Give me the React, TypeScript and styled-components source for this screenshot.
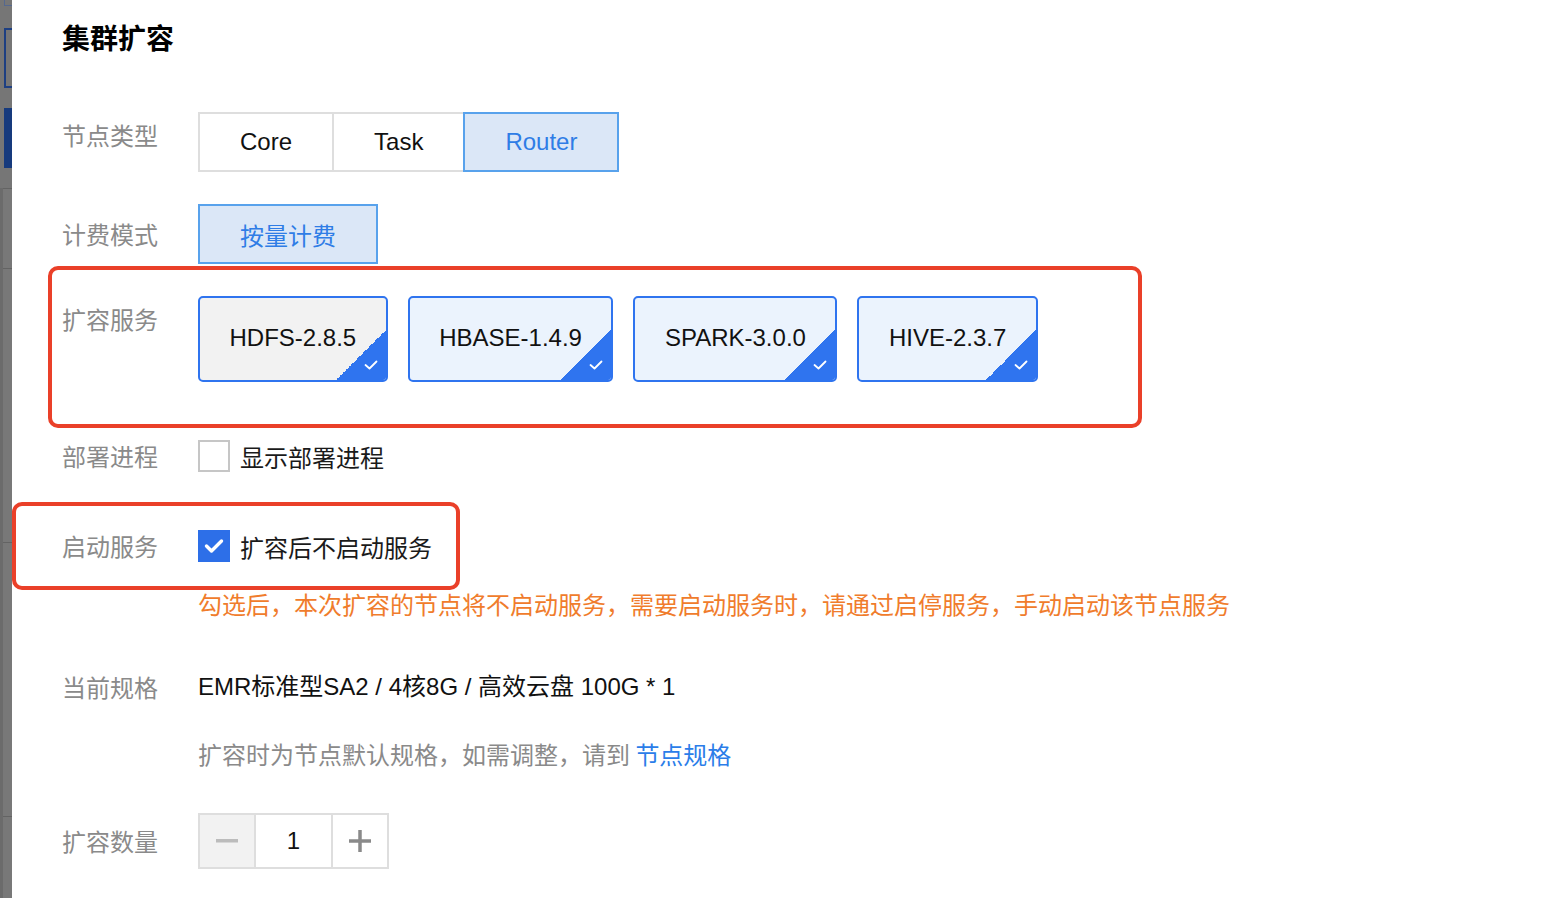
import React from "react";
import styled, { createGlobalStyle, css } from "styled-components";

const GlobalStyle = createGlobalStyle`
  html, body { margin: 0; padding: 0; background: #fff; }
  body { font-family: "Liberation Sans", "Noto Sans CJK SC", sans-serif; }
  * { box-sizing: border-box; }
`;

const Page = styled.div`
  display: flex;
  height: 898px;
  overflow: hidden;
  background: #fff;
`;

const Strip = styled.div`
  width: 12px;
  flex: none;
  background: #767676;
  display: flex;
  flex-direction: column;
  align-items: flex-end;
`;

const StripTab = styled.div<{ $mt: number; $h: number; $variant: "top" | "outline" | "filled" }>`
  width: 8px;
  margin-top: ${(p) => p.$mt}px;
  height: ${(p) => p.$h}px;
  ${(p) =>
    p.$variant === "top"
      ? css`border: 1px solid #55688f; border-top: none; border-right: none;`
      : p.$variant === "outline"
      ? css`border: 2px solid #1d3f82; border-right: none;`
      : css`background: #163a7d;`}
`;

const StripColumn = styled.div`
  margin-top: 20px;
  width: 12px;
  flex: 1;
  display: flex;
  flex-direction: column;
  border-left: 3px solid #6b6b6b;
  background: #787878;
`;

const StripCell = styled.div<{ $h?: number }>`
  border-top: 1px solid #636363;
  ${(p) => (p.$h ? css`height: ${p.$h}px;` : css`flex: 1;`)}
`;

const Panel = styled.div`
  flex: 1;
  padding: 17px 0 0 50px;
  color: #111;
`;

const Title = styled.h1`
  margin: 0;
  font-size: 28px;
  line-height: 40px;
  font-weight: 700;
  color: #000;
  font-family: "Noto Sans CJK SC", sans-serif;
`;

const Row = styled.div<{ $mt: number; $start?: boolean }>`
  position: relative;
  display: flex;
  align-items: ${(p) => (p.$start ? "flex-start" : "center")};
  margin-top: ${(p) => p.$mt}px;
`;

const Label = styled.div<{ $lh?: number }>`
  width: 136px;
  flex: none;
  font-size: 24px;
  line-height: ${(p) => p.$lh ?? 48}px;
  color: #8a8a8a;
  font-family: "Noto Sans CJK SC", sans-serif;
`;

const SegmentGroup = styled.div`
  display: flex;
`;

const Segment = styled.div<{ $active?: boolean }>`
  position: relative;
  height: 60px;
  padding: 0 40px;
  display: flex;
  align-items: center;
  font-size: 24px;
  border: 2px solid ${(p) => (p.$active ? "#58a2ec" : "#dedede")};
  background: ${(p) => (p.$active ? "#dbe7f7" : "#fff")};
  color: ${(p) => (p.$active ? "#2f7de6" : "#111")};
  z-index: ${(p) => (p.$active ? 1 : 0)};
  & + & { margin-left: -2px; }
`;

const BillingButton = styled(Segment)`
  width: 180px;
  justify-content: center;
  padding: 0;
  font-family: "Noto Sans CJK SC", sans-serif;
`;

const CardList = styled.div`
  display: flex;
  gap: 20px;
`;

const ServiceCard = styled.div<{ $muted?: boolean }>`
  position: relative;
  height: 86px;
  padding: 0 29.5px 2px;
  display: flex;
  align-items: center;
  font-size: 24px;
  color: #111;
  border: 2px solid #2f74ef;
  border-radius: 5px;
  overflow: hidden;
  background: ${(p) => (p.$muted ? "#f2f2f2" : "#ebf3fd")};
`;

const CardCorner = styled.div`
  position: absolute;
  right: 0;
  bottom: 0;
  width: 50px;
  height: 50px;
  background: linear-gradient(to bottom right, transparent 50%, #2f74ef 50%);
`;

const CornerCheck = styled.svg`
  position: absolute;
  right: 8px;
  bottom: 10px;
`;

const Annotation = styled.div<{ $l: number; $t: number; $w: number; $h: number }>`
  position: absolute;
  left: ${(p) => p.$l}px;
  top: ${(p) => p.$t}px;
  width: ${(p) => p.$w}px;
  height: ${(p) => p.$h}px;
  border: 4px solid #ea4029;
  border-radius: 10px;
  pointer-events: none;
`;

const CheckLine = styled.label`
  display: flex;
  align-items: center;
  gap: 10px;
  font-size: 24px;
  color: #1a1a1a;
  font-family: "Noto Sans CJK SC", sans-serif;
`;

const Box = styled.span<{ $checked?: boolean }>`
  width: 32px;
  height: 32px;
  flex: none;
  display: flex;
  align-items: center;
  justify-content: center;
  border: ${(p) => (p.$checked ? "none" : "2px solid #c6c6c6")};
  background: ${(p) => (p.$checked ? "#2d6fe8" : "#fff")};
`;

const Hint = styled.div<{ $mt: number; $tone: "warn" | "muted" }>`
  margin: ${(p) => p.$mt}px 0 0 136px;
  font-size: 24px;
  line-height: ${(p) => (p.$tone === "warn" ? 32 : 48)}px;
  color: ${(p) => (p.$tone === "warn" ? "#f07c2c" : "#8a8a8a")};
  font-family: "Noto Sans CJK SC", sans-serif;
`;

const Link = styled.a`
  color: #2b7de9;
  text-decoration: none;
`;

const Value = styled.div`
  font-size: 24px;
  line-height: 48px;
  color: #111;
`;

const Stepper = styled.div`
  display: flex;
  height: 56px;
`;

const StepButton = styled.div<{ $disabled?: boolean }>`
  position: relative;
  width: 58px;
  height: 56px;
  border: 2px solid #dedede;
  background: ${(p) => (p.$disabled ? "#f2f2f2" : "#fff")};
  display: flex;
  align-items: center;
  justify-content: center;
  & + * { margin-left: -2px; }
`;

const StepInput = styled.div`
  width: 79px;
  height: 56px;
  border: 2px solid #dedede;
  display: flex;
  align-items: center;
  justify-content: center;
  font-size: 24px;
  color: #111;
  margin-left: -2px;
  & + * { margin-left: -2px; }
`;

const services = [
  { name: "HDFS-2.8.5", muted: true },
  { name: "HBASE-1.4.9" },
  { name: "SPARK-3.0.0" },
  { name: "HIVE-2.3.7" },
];

const CornerMark = () => (
  <CornerCheck width="14" height="10" viewBox="0 0 14 10">
    <path d="M1.5 5 L5.5 8.5 L12.5 1.5" fill="none" stroke="#fff" strokeWidth="1.8" strokeLinecap="round" strokeLinejoin="round" />
  </CornerCheck>
);

export default function App() {
  return (
    <>
      <GlobalStyle />
      <Page>
        <Strip>
          <StripTab $mt={0} $h={6} $variant="top" />
          <StripTab $mt={22} $h={60} $variant="outline" />
          <StripTab $mt={20} $h={60} $variant="filled" />
          <StripColumn>
            <StripCell $h={80} />
            <StripCell $h={274} />
            <StripCell $h={274} />
            <StripCell />
          </StripColumn>
        </Strip>
        <Panel>
          <Title>集群扩容</Title>

          <Row $mt={55} $start>
            <Label $lh={45}>节点类型</Label>
            <SegmentGroup>
              <Segment>Core</Segment>
              <Segment>Task</Segment>
              <Segment $active>Router</Segment>
            </SegmentGroup>
          </Row>

          <Row $mt={32}>
            <Label>计费模式</Label>
            <BillingButton $active>按量计费</BillingButton>
          </Row>

          <Row $mt={32} $start>
            <Annotation $l={-14} $t={-30} $w={1094} $h={162} />
            <Label $lh={45}>扩容服务</Label>
            <CardList>
              {services.map((s) => (
                <ServiceCard key={s.name} $muted={s.muted}>
                  {s.name}
                  <CardCorner />
                  <CornerMark />
                </ServiceCard>
              ))}
            </CardList>
          </Row>

          <Row $mt={50}>
            <Label>部署进程</Label>
            <CheckLine>
              <Box />
              显示部署进程
            </CheckLine>
          </Row>

          <Row $mt={42}>
            <Annotation $l={-50} $t={-20} $w={448} $h={88} />
            <Label>启动服务</Label>
            <CheckLine>
              <Box $checked>
                <svg width="20" height="16" viewBox="0 0 20 16">
                  <path d="M2.5 8 L7.5 13 L17.5 3" fill="none" stroke="#fff" strokeWidth="3.4" strokeLinecap="round" strokeLinejoin="round" />
                </svg>
              </Box>
              扩容后不启动服务
            </CheckLine>
          </Row>

          <Hint $mt={18} $tone="warn">
            勾选后，本次扩容的节点将不启动服务，需要启动服务时，请通过启停服务，手动启动该节点服务
          </Hint>

          <Row $mt={43}>
            <Label>当前规格</Label>
            <Value>EMR标准型SA2 / 4核8G / 高效云盘 100G * 1</Value>
          </Row>

          <Hint $mt={19} $tone="muted">
            扩容时为节点默认规格，如需调整，请到 <Link href="#">节点规格</Link>
          </Hint>

          <Row $mt={35}>
            <Label>扩容数量</Label>
            <Stepper>
              <StepButton $disabled>
                <svg width="22" height="4" viewBox="0 0 22 4">
                  <rect x="0" y="0" width="22" height="3.5" fill="#bcbcbc" />
                </svg>
              </StepButton>
              <StepInput>1</StepInput>
              <StepButton>
                <svg width="22" height="22" viewBox="0 0 22 22">
                  <rect x="0" y="9.25" width="22" height="3.5" fill="#8a8a8a" />
                  <rect x="9.25" y="0" width="3.5" height="22" fill="#8a8a8a" />
                </svg>
              </StepButton>
            </Stepper>
          </Row>
        </Panel>
      </Page>
    </>
  );
}
